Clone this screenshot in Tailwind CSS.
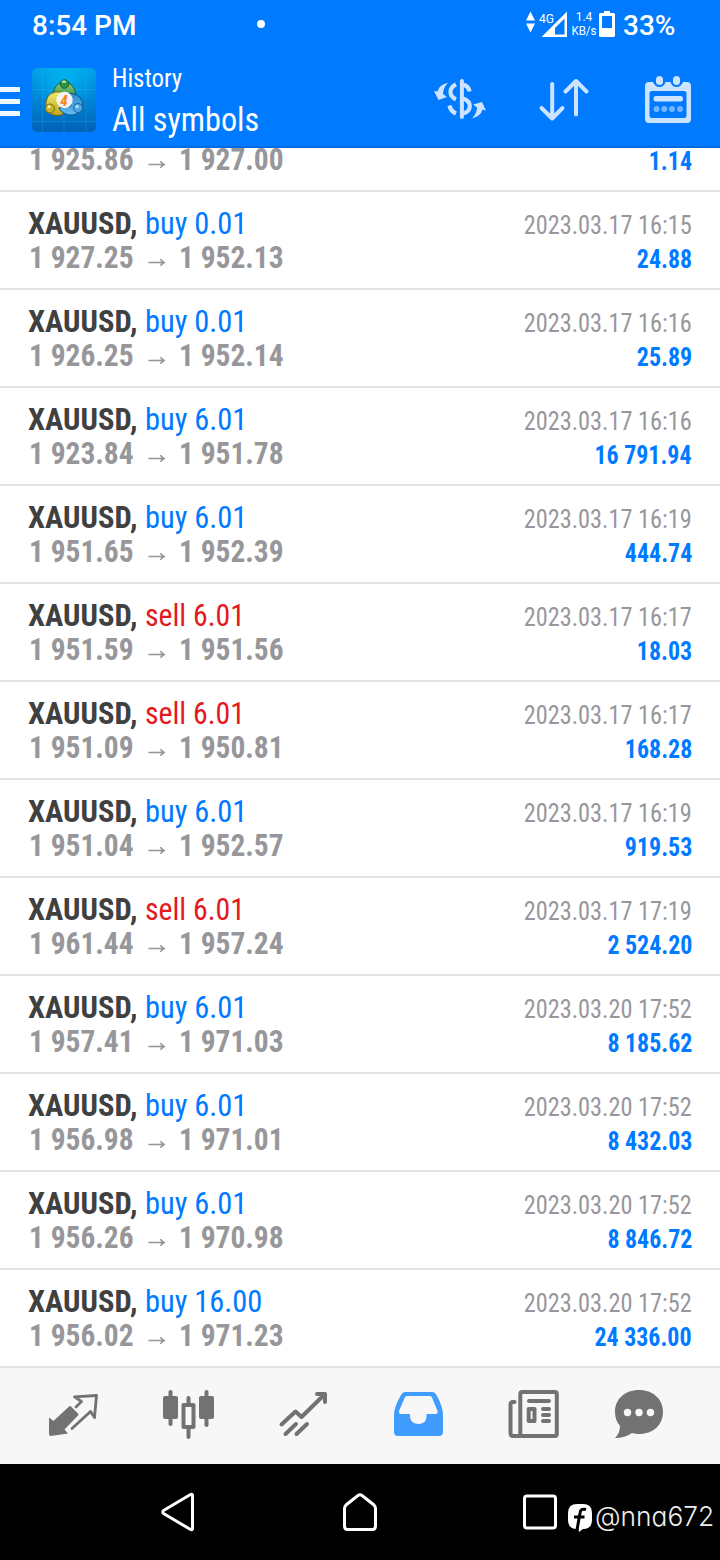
<!DOCTYPE html>
<html lang="en">
<head>
<meta charset="utf-8">
<title>History</title>
<script src="https://cdn.jsdelivr.net/npm/@tailwindcss/browser@4"></script>
</head>
<body class="w-[720px] h-[1560px] overflow-hidden bg-white flex flex-col font-['Roboto_Condensed',Roboto,sans-serif]">
<header class="h-[148px] shrink-0 bg-[#007aff] border-b-2 border-[#006be0] text-white flex flex-col">
  <div class="h-12 shrink-0 flex items-center pl-8 font-[Roboto,sans-serif]">
    <span class="w-[225px] pt-1 text-[28px] leading-[50px] font-medium whitespace-nowrap">8:54 PM</span>
    <span class="size-2 rounded-full bg-white"></span>
    <svg class="ml-[261px]" width="42" height="28" viewBox="526 10 42 28" fill="#fff">
      <path d="M530.500 11.500L535 20.500H526ZM526 23.500H535L530.500 32.500Z"/>
      <path fill-rule="evenodd" d="M567 11.500V37H541.500ZM564.500 18.500L555 28V34.500H564.500Z"/>
      <text x="539" y="22.500" font-size="13" textLength="15" lengthAdjust="spacingAndGlyphs">4G</text>
    </svg>
    <span class="ml-[2px] w-7 text-[12px] leading-[14px] text-center flex flex-col"><span>1.4</span><span class="scale-x-[.96]">KB/s</span></span>
    <svg class="ml-px" width="16" height="26" viewBox="0 0 16 26" fill="#fff"><path fill-rule="evenodd" d="M5 0H11V2H14.500Q16 2 16 3.500V24.500Q16 26 14.500 26H1.500Q0 26 0 24.500V3.500Q0 2 1.500 2H5ZM3 5V17H13V5Z"/></svg>
    <span class="ml-2 pt-1 text-[28px] leading-[50px] font-medium">33%</span>
  </div>
  <div class="flex-1 flex items-center">
    <div class="w-5 flex flex-col gap-[7px] mt-[8px]"><i class="h-[5px] bg-[#eff7ff]"></i><i class="h-[5px] bg-[#eff7ff]"></i><i class="h-[5px] bg-[#eff7ff]"></i></div>
    <svg class="ml-3 mt-[6px]" width="64" height="64" viewBox="0 0 64 64">
      <defs>
        <linearGradient id="bg" x1="0" y1="0" x2="0" y2="1"><stop offset="0" stop-color="#00a2ea"/><stop offset=".5" stop-color="#0083d5"/><stop offset="1" stop-color="#0062b8"/></linearGradient>
        <radialGradient id="glow" cx=".5" cy=".2" r=".5"><stop offset="0" stop-color="#00c4f5" stop-opacity=".6"/><stop offset="1" stop-color="#00c4f5" stop-opacity="0"/></radialGradient>
        <linearGradient id="gr" x1="0" y1="0" x2="0" y2="1"><stop offset="0" stop-color="#8dcb82"/><stop offset="1" stop-color="#278a38"/></linearGradient>
        <linearGradient id="ye" x1="0" y1="0" x2="0" y2="1"><stop offset="0" stop-color="#f3ea70"/><stop offset="1" stop-color="#bca51c"/></linearGradient>
        <linearGradient id="bl" x1="0" y1="0" x2="0" y2="1"><stop offset="0" stop-color="#2e8cd0"/><stop offset="1" stop-color="#62bdf0"/></linearGradient>
      </defs>
      <rect width="64" height="64" rx="5" fill="url(#bg)"/><rect width="64" height="64" rx="5" fill="url(#glow)"/>
      <path d="M10.500 0V64M54 0V64M0 21.500H64M0 53.500H64M32 0V64" stroke="#46bdf2" stroke-opacity=".22" fill="none"/>
      <g stroke-width="1">
        <path d="M21 32Q20 19 28 15Q38 12 42.500 21Q45 26 43 33Z" fill="url(#gr)" stroke="#17602a"/>
        <path d="M30 24Q16 22 14 34Q12 46 24 47.500Q32 48 33 42Z" fill="url(#ye)" stroke="#75670d"/>
        <path d="M38 25Q52 27 50.500 39Q47 48 37 47Q29 45 27 40L39 38Z" fill="url(#bl)" stroke="#0d5189"/>
        <circle cx="32.500" cy="16" r="4.300" fill="#2f9640" stroke="#185f27"/><circle cx="18" cy="40.500" r="4.500" fill="#c6b52e" stroke="#7c6b0e"/><circle cx="46" cy="40" r="4.500" fill="#4fa8e2" stroke="#16659f"/>
      </g>
      <ellipse cx="32" cy="13.800" rx="2.200" ry="1.200" fill="#b5e3ae"/><circle cx="17" cy="38.800" r="1.500" fill="#fff6a0"/><circle cx="45" cy="38.500" r="1.500" fill="#bde6ff"/>
      <circle cx="32.500" cy="32" r="8.200" fill="#f4f2f2"/>
      <text x="32" y="37.500" text-anchor="middle" font-size="15" font-weight="700" font-style="italic" fill="#f58220">4</text>
    </svg>
    <div class="ml-4 w-[318px] flex flex-col items-start whitespace-nowrap">
      <span class="text-[26px] leading-[30px] mt-[7px] origin-left scale-x-[.955]">History</span>
      <span class="text-[34px] leading-[40px] mt-[6px] origin-left scale-x-[.947]">All symbols</span>
    </div>
    <svg class="mt-[6px]" width="286" height="60" viewBox="430 70 286 60" fill="none" stroke="#cce4ff" stroke-linecap="round" stroke-linejoin="round">
      <path d="M461.900 81V117" stroke-width="4"/>
      <path d="M456 84.500Q450.500 87 450.500 92Q450.500 97 456 99.200M463 84.800Q468.500 85.500 469.500 91.500M449.500 105.500Q450.500 111 456 113.500M463 98.500Q470 101 469.800 106.500Q469.500 112 463 113.500" stroke-width="4.200" stroke-linecap="butt"/>
      <path d="M448 83Q439 84.500 437.500 91.500L434 91L438.500 100L447 97L443 94Q443 88 448 83ZM472 118.500Q481 116 482.500 109.500L486 110.500L482 102L473 104.500L477 107.500Q477 113 472 118.500Z" fill="#cce4ff" stroke="none"/>
      <path d="M552.200 84V118M541.500 108L552.200 118.500L562.500 108M576 114.500V81M565.500 91.500L576 81L586.500 91.500" stroke-width="4"/>
      <path fill-rule="evenodd" d="M649 82H653Q655 87 659.500 87Q664 87 665.500 82H670.500Q672 87 676.500 87Q681 87 683 82H687Q691 82 691 86V119Q691 123 687 123H649Q645 123 645 119V86Q645 82 649 82ZM652 91Q649.500 91 649.500 93.500V115.500Q649.500 118 652 118H684Q686.500 118 686.500 115.500V93.500Q686.500 91 684 91Z" fill="#cce4ff" stroke="none"/>
      <g fill="#cce4ff" stroke="none"><rect x="656" y="76" width="7" height="9" rx="3.500"/><rect x="673" y="76" width="7" height="9" rx="3.500"/><rect x="653.500" y="96" width="29.500" height="5.500" rx="2.500"/></g>
      <g fill="#73b6ff" stroke="none"><circle cx="656.500" cy="109" r="3"/><circle cx="664.300" cy="109" r="3"/><circle cx="672" cy="109" r="3"/><circle cx="680" cy="109" r="3"/></g>
    </svg>
  </div>
</header>
<main class="h-[1220px] shrink-0 overflow-hidden flex flex-col justify-end"><div id="rows" class="shrink-0"></div></main>
<nav class="h-24 shrink-0 bg-[#f7f7f7]">
  <svg width="720" height="96" viewBox="0 1368 720 96" fill="none" stroke="#727272" stroke-linecap="round" stroke-linejoin="round">
    <path d="M69 1406.500Q70 1405.500 71 1406.500L78 1413.500Q79 1414.500 78 1415.500L64.500 1429.500L68 1433.500L51 1436Q49 1436 49 1434V1417.500L53.500 1421Z" fill="#727272" stroke="none"/>
    <path d="M76 1407L81.500 1401.500L74.500 1396.800L96.500 1395.500L94.500 1417.500L90.500 1411.500L72 1428.500" stroke-width="2.800"/>
    <g fill="#727272" stroke="none"><rect x="163" y="1396" width="15" height="23" rx="2"/><rect x="199" y="1396" width="15" height="23" rx="2"/><rect x="168.500" y="1390" width="4" height="36" rx="2"/><rect x="204.500" y="1390" width="4" height="37" rx="2"/><rect x="186.500" y="1396" width="4" height="10" rx="2"/><rect x="186.500" y="1426" width="4" height="13" rx="2"/></g>
    <rect x="183.500" y="1405" width="10" height="22" stroke-width="4"/>
    <path d="M281.500 1424.500L295.500 1411.500L301.500 1417L325 1394M317 1394H325V1402M285.500 1434L296 1424M296.500 1434L307 1424" stroke-width="4"/>
    <path fill-rule="evenodd" d="M405 1392H432Q435 1392 436.500 1395Q443 1407 443 1415V1432Q443 1436 439 1436H398Q394 1436 394 1432V1415Q394 1407 401 1395Q402.500 1392 405 1392ZM407 1396Q405.500 1396 405 1397L399 1411Q398.500 1414 401 1414H410V1417Q411 1424 418.500 1424Q426 1424 426.500 1417V1414H435.500Q438 1414 437.500 1411L432 1397.500Q431.500 1396 430 1396Z" fill="#409cff" stroke="none"/>
    <rect x="520.300" y="1392" width="36.500" height="44" rx="2" stroke-width="4"/>
    <path d="M514.500 1402H513Q510.500 1402 510.500 1404.500V1433Q510.500 1436 513 1436H520" stroke-width="4"/>
    <path d="M529 1401H549M543 1409H549M543 1415H549M543 1421H549" stroke-width="4"/><rect x="528.700" y="1409" width="5.800" height="12" stroke-width="4"/>
    <path d="M639 1390C653 1390 663 1399 663 1412C663 1425 653 1434 639 1434Q635 1434 632 1433Q625 1438 615 1438Q620 1433 620 1426Q615 1420 615 1412C615 1399 625 1390 639 1390Z" fill="#727272" stroke="none"/>
    <g fill="#f7f7f7" stroke="none"><circle cx="627.500" cy="1412.500" r="3.700"/><circle cx="639" cy="1412.500" r="3.700"/><circle cx="650.500" cy="1412.500" r="3.700"/></g>
  </svg>
</nav>
<footer class="h-24 shrink-0 bg-black flex items-center">
  <svg width="595" height="96" viewBox="0 1464 595 96" fill="none" stroke="#fff" stroke-width="3" stroke-linejoin="round">
    <path d="M190.500 1494.500Q192.500 1493.500 192.500 1495.500V1528.500Q192.500 1530.500 190.500 1529.500L163.500 1513.500Q162 1512 163.500 1510.500Z"/>
    <path d="M358 1495.500Q360 1494 362 1495.500L374 1505Q375.500 1506.500 375.500 1508.500V1526Q375.500 1529.500 372.500 1529.500H347.500Q344.500 1529.500 344.500 1526V1508.500Q344.500 1506.500 346 1505Z"/>
    <rect x="524.500" y="1496" width="31" height="32" rx="2.500"/>
    <path d="M577 1504H583Q592 1504 592 1513V1520Q592 1529 583 1529L579 1532L578.500 1529H577Q568 1529 568 1520V1513Q568 1504 577 1504Z" fill="#fff" stroke="none"/>
    <path d="M586 1509.500Q580.500 1508 580 1513L577 1530M574 1517H584.500" stroke="#000"/>
  </svg>
  <span class="text-[27px] leading-[32px] mt-[10px] text-[#eee] font-[Inter,sans-serif] font-light [font-feature-settings:'cv11'] whitespace-nowrap origin-left scale-x-[.975]">@nna672</span>
</footer>
<script>
const deals = [
 ['buy','0.01','1 925.86','1 927.00','2023.03.17 16:15','1.14'],
 ['buy','0.01','1 927.25','1 952.13','2023.03.17 16:15','24.88'],
 ['buy','0.01','1 926.25','1 952.14','2023.03.17 16:16','25.89'],
 ['buy','6.01','1 923.84','1 951.78','2023.03.17 16:16','16 791.94'],
 ['buy','6.01','1 951.65','1 952.39','2023.03.17 16:19','444.74'],
 ['sell','6.01','1 951.59','1 951.56','2023.03.17 16:17','18.03'],
 ['sell','6.01','1 951.09','1 950.81','2023.03.17 16:17','168.28'],
 ['buy','6.01','1 951.04','1 952.57','2023.03.17 16:19','919.53'],
 ['sell','6.01','1 961.44','1 957.24','2023.03.17 17:19','2 524.20'],
 ['buy','6.01','1 957.41','1 971.03','2023.03.20 17:52','8 185.62'],
 ['buy','6.01','1 956.98','1 971.01','2023.03.20 17:52','8 432.03'],
 ['buy','6.01','1 956.26','1 970.98','2023.03.20 17:52','8 846.72'],
 ['buy','16.00','1 956.02','1 971.23','2023.03.20 17:52','24 336.00']];
document.getElementById('rows').innerHTML = deals.map(([side,vol,open,close,time,profit], i) => `
<div class="${i ? 'h-[98px] border-b-2 border-[#e4e4e4] px-7 pt-[14px] flex justify-between whitespace-nowrap' : 'h-[44px] border-b-2 border-[#e4e4e4] px-7 flex justify-between whitespace-nowrap'}">
  <div class="flex flex-col items-start text-[32px] leading-[34px]">
    ${i ? `<div class="flex"><span class="w-[117px] text-[#404040] font-bold origin-left scale-x-[.955]">XAUUSD,</span><span class="${side === 'buy' ? 'origin-left scale-x-[.95] text-[#007aff]' : 'origin-left scale-x-[.93] text-[#e2191d]'}">${side} ${vol}</span></div>` : ''}
    <div class="${i ? 'flex pl-px text-[#97979b] font-bold' : 'flex pl-px -mt-[6px] text-[#97979b] font-bold'}"><span class="w-[114px] origin-left scale-x-[.92]">${open}</span><span class="w-[36px] pt-[4px] text-[27px] leading-[28px] font-normal [-webkit-text-stroke:0.5px_#97979b] font-['Liberation_Sans',sans-serif]">→</span><span class="origin-left scale-x-[.92]">${close}</span></div>
  </div>
  <div class="flex flex-col items-end text-[26px] leading-[34px] ${i ? 'pt-[2px]' : '-mt-[4px]'}">
    ${i ? `<div class="text-[#97979b] origin-right scale-x-[.935]">${time}</div>` : ''}
    <div class="text-[#007aff] font-bold origin-right scale-x-[.92]">${profit}</div>
  </div>
</div>`).join('');
</script>
</body>
</html>
